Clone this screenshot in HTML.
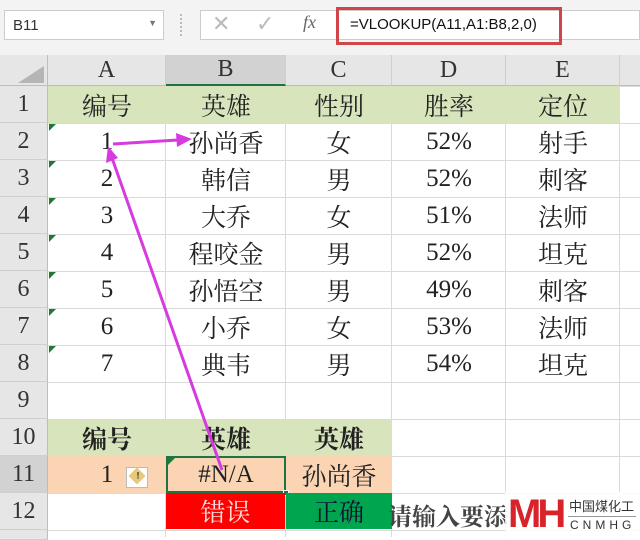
<!DOCTYPE html>
<html><head><meta charset="utf-8"><style>
body{margin:0;width:640px;height:537px;overflow:hidden;background:#fff;position:relative;font-family:"Liberation Serif","Noto Serif CJK SC",serif}
.a{position:absolute;box-sizing:border-box}
.c{position:absolute;box-sizing:border-box;display:flex;align-items:center;justify-content:center;font-size:25px;color:#222}
.rh{position:absolute;left:0;width:48px;background:#e6e6e6;border-bottom:1px solid #cfcfcf;border-right:1px solid #bdbdbd;display:flex;align-items:center;justify-content:center;font-size:24px;color:#333;box-sizing:border-box}
.ch{position:absolute;top:55px;height:31px;background:#e6e6e6;border-right:1px solid #cfcfcf;border-bottom:1px solid #bdbdbd;display:flex;align-items:center;justify-content:center;font-size:24px;color:#333;box-sizing:border-box}
.tri{position:absolute;width:0;height:0;border-top:7px solid #1e7a30;border-right:7px solid transparent}
</style></head><body>
<div class="a" style="left:0;top:0;width:640px;height:55px;background:#f3f3f3"></div>
<div class="a" style="left:4px;top:10px;width:160px;height:30px;background:#fff;border:1px solid #ccc;font:15px 'Liberation Sans',sans-serif;color:#333;padding:6px 8px">B11<span style="position:absolute;right:6px;top:7px;font-size:9px;color:#777">▼</span></div>
<div class="a" style="left:180px;top:14px;width:4px;height:22px;border-left:2px dotted #bbb"></div>
<div class="a" style="left:200px;top:10px;width:440px;height:30px;background:#fff;border:1px solid #ccc"></div>
<div class="a" style="left:212px;top:11px;font:22px 'Liberation Sans',sans-serif;color:#bbb">✕</div>
<div class="a" style="left:256px;top:11px;font:22px 'Liberation Sans',sans-serif;color:#bbb">✓</div>
<div class="a" style="left:303px;top:12px;font:italic 18px 'Liberation Serif',serif;color:#666">fx</div>
<div class="a" style="left:336px;top:7px;width:226px;height:38px;border:3px solid #d0454a"></div>
<div class="a" style="left:350px;top:16px;font:15px 'Liberation Sans',sans-serif;color:#111">=VLOOKUP(A11,A1:B8,2,0)</div>
<div class="a" style="left:0;top:55px;width:48px;height:31px;background:#e6e6e6;border-right:1px solid #bdbdbd;border-bottom:1px solid #bdbdbd"></div>
<div class="a" style="left:18px;top:66px;width:0;height:0;border-left:26px solid transparent;border-bottom:17px solid #b5b5b5"></div>
<div class="ch" style="left:48px;width:118px">A</div>
<div class="ch" style="left:166px;width:120px;background:#d2d2d2;border-bottom:2px solid #217346">B</div>
<div class="ch" style="left:286px;width:106px">C</div>
<div class="ch" style="left:392px;width:114px">D</div>
<div class="ch" style="left:506px;width:114px">E</div>
<div class="ch" style="left:620px;width:30px"></div>
<div class="a" style="left:48px;top:86px;width:600px;height:451px;background-image:linear-gradient(#dadada 1px,transparent 1px);background-size:100% 37px"></div>
<div class="a" style="left:165px;top:86px;width:1px;height:451px;background:#dadada"></div>
<div class="a" style="left:285px;top:86px;width:1px;height:451px;background:#dadada"></div>
<div class="a" style="left:391px;top:86px;width:1px;height:451px;background:#dadada"></div>
<div class="a" style="left:505px;top:86px;width:1px;height:451px;background:#dadada"></div>
<div class="a" style="left:619px;top:86px;width:1px;height:451px;background:#dadada"></div>
<div class="rh" style="top:86px;height:37px">1</div>
<div class="rh" style="top:123px;height:37px">2</div>
<div class="rh" style="top:160px;height:37px">3</div>
<div class="rh" style="top:197px;height:37px">4</div>
<div class="rh" style="top:234px;height:37px">5</div>
<div class="rh" style="top:271px;height:37px">6</div>
<div class="rh" style="top:308px;height:37px">7</div>
<div class="rh" style="top:345px;height:37px">8</div>
<div class="rh" style="top:382px;height:37px">9</div>
<div class="rh" style="top:419px;height:37px">10</div>
<div class="rh" style="top:456px;height:37px;background:#d2d2d2">11</div>
<div class="rh" style="top:493px;height:37px">12</div>
<div class="rh" style="top:530px;height:10px"></div>
<div class="a" style="left:48px;top:86px;width:572px;height:37px;background:#d8e4bc"></div>
<div class="c" style="left:48px;top:86px;width:118px;height:37px">编号</div>
<div class="c" style="left:166px;top:86px;width:120px;height:37px">英雄</div>
<div class="c" style="left:286px;top:86px;width:106px;height:37px">性别</div>
<div class="c" style="left:392px;top:86px;width:114px;height:37px">胜率</div>
<div class="c" style="left:506px;top:86px;width:114px;height:37px">定位</div>
<div id="rows"></div>
<script>
var d=[["1","孙尚香","女","52%","射手"],["2","韩信","男","52%","刺客"],["3","大乔","女","51%","法师"],["4","程咬金","男","52%","坦克"],["5","孙悟空","男","49%","刺客"],["6","小乔","女","53%","法师"],["7","典韦","男","54%","坦克"]];
var L=[48,166,286,392,506],W=[118,120,106,114,114],h="";
d.forEach(function(r,i){var t=123+37*i;h+='<div class="tri" style="left:49px;top:'+(t+1)+'px"></div>';
r.forEach(function(v,j){h+='<div class="c" style="left:'+L[j]+'px;top:'+t+'px;width:'+W[j]+'px;height:37px">'+v+'</div>';});});
document.getElementById("rows").innerHTML=h;
</script>
<div class="a" style="left:48px;top:419px;width:344px;height:37px;background:#d8e4bc"></div>
<div class="c" style="left:48px;top:419px;width:118px;height:37px;font-weight:bold">编号</div>
<div class="c" style="left:166px;top:419px;width:120px;height:37px;font-weight:bold">英雄</div>
<div class="c" style="left:286px;top:419px;width:106px;height:37px;font-weight:bold">英雄</div>
<div class="a" style="left:48px;top:456px;width:344px;height:37px;background:#fbd4b4"></div>
<div class="c" style="left:48px;top:456px;width:118px;height:37px">1</div>
<div class="a" style="left:126px;top:467px;width:22px;height:21px;background:#fff;border:1px solid #bbb"></div>
<div class="a" style="left:131px;top:470px;width:12px;height:12px;background:#e8c87a;transform:rotate(45deg);font:bold 9px sans-serif;text-align:center;color:#333"><span style="display:inline-block;transform:rotate(-45deg)">!</span></div>
<div class="c" style="left:166px;top:456px;width:120px;height:37px;border:2px solid #217346">#N/A</div>
<div class="tri" style="left:168px;top:458px"></div>
<div class="a" style="left:283px;top:490px;width:6px;height:6px;background:#217346;border:1px solid #fff"></div>
<div class="c" style="left:286px;top:456px;width:106px;height:37px">孙尚香</div>
<div class="c" style="left:166px;top:493px;width:119px;height:36px;background:#ff0000;color:#fdd">错误</div>
<div class="c" style="left:286px;top:493px;width:106px;height:36px;background:#00a550;color:#113">正确</div>
<div class="a" style="left:388px;top:497px;font:bold 24px 'Noto Serif CJK SC',serif;color:#444">请输入要添</div>
<div class="a" style="left:505px;top:492px;width:135px;height:45px;background:rgba(255,255,255,.85)"></div>
<div class="a" style="left:508px;top:494px;font:bold 40px/40px 'Liberation Sans',sans-serif;color:#d9232a;letter-spacing:-4px">MH</div>
<div class="a" style="left:569px;top:496px;font:13px 'Noto Sans CJK SC',sans-serif;color:#333;white-space:nowrap">中国煤化工</div>
<div class="a" style="left:568px;top:516px;width:68px;border-top:1px solid #999"></div>
<div class="a" style="left:570px;top:518px;font:12px 'Liberation Sans',sans-serif;color:#333;letter-spacing:4px">CNMHG</div>
<svg class="a" style="left:0;top:0" width="640" height="537">
<g stroke="#d63bdf" fill="#d63bdf" stroke-width="3">
<line x1="113" y1="144" x2="178" y2="140"/>
<polygon points="192,139 176,133 177,147" stroke="none"/>
<line x1="222" y1="470" x2="112" y2="158"/>
<polygon points="108,146 106,163 118,158" stroke="none"/>
</g></svg>
</body></html>
